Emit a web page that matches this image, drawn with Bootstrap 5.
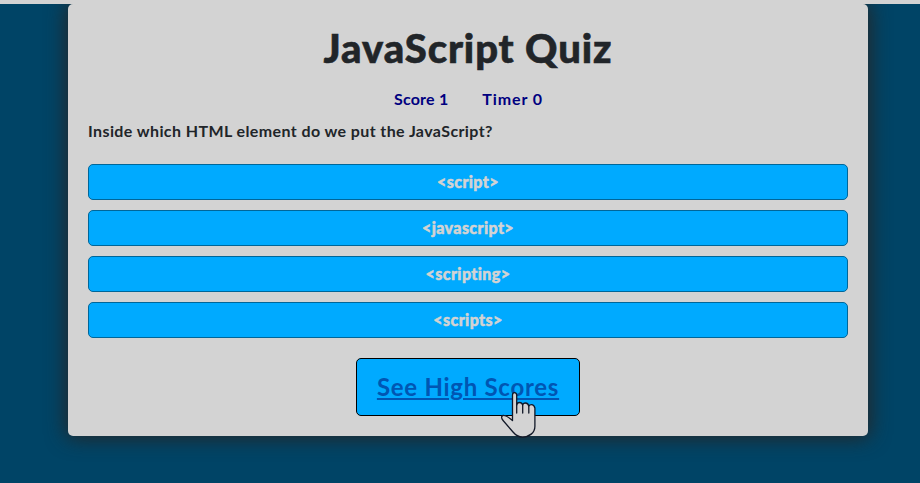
<!DOCTYPE html>
<html lang="en">
<head>
<meta charset="utf-8">
<meta name="viewport" content="width=device-width, initial-scale=1">
<title>JavaScript Quiz</title>
<link href="https://cdn.jsdelivr.net/npm/bootstrap@5.3.0/dist/css/bootstrap.min.css" rel="stylesheet">
<style>
body { background: #004466; font-family: "Gill Sans MT", Lato, sans-serif; font-variant-ligatures: none; border-top: 4px solid #d3d3d3; height: 483px; padding-left: 16px; overflow: hidden; }
.quiz-panel { width: 800px; height: 432px; padding: 20px; background: #d3d3d3; border-radius: 5px; box-shadow: 0 0 20px 2px #262626; clip-path: inset(0 -40px -40px -40px); color: #212529; }
.quiz-title { font-size: 40px; line-height: 48px; font-weight: 900; letter-spacing: .9px; -webkit-text-stroke: .6px; }
.quiz-stats { color: #000080; font-size: 16px; line-height: 24px; gap: 34px; margin-top: 15px; }
.quiz-stats span:first-child { letter-spacing: .2px; }
.quiz-stats span:last-child { letter-spacing: .9px; margin-right: -1px; }
.quiz-question { font-size: 16px; line-height: 24px; margin-top: 8px; letter-spacing: .4px; }
.answers { gap: 10px; margin-top: 21px; }
.answer { height: 36px; padding: 0; border: 1px solid #006699; border-radius: 5px; background: #00aaff; color: #d3d3d3; font-size: 16px; font-weight: 900; line-height: 34px; letter-spacing: .4px; -webkit-text-stroke: .5px; }
.scores-btn { width: 224px; height: 58px; margin-top: 20px; padding: 0; background: #00aaff; border: 1px solid #000; border-radius: 5px; }
.scores-btn a { color: #0056b3; font-size: 24px; line-height: 56px; letter-spacing: .73px; text-decoration-thickness: 2px; text-underline-offset: 2px; }
.hand { left: 144px; top: 33px; }
</style>
</head>
<body>
<main class="quiz-panel mx-auto d-flex flex-column">
  <h1 class="quiz-title text-center mb-0">JavaScript Quiz</h1>
  <div class="quiz-stats d-flex justify-content-center fw-bold"><span>Score 1</span><span>Timer 0</span></div>
  <div class="quiz-question fw-bold"><span>Inside which HTML element do we put the JavaScript?</span></div>
  <div class="answers d-grid">
    <button class="btn answer">&lt;script&gt;</button>
    <button class="btn answer">&lt;javascript&gt;</button>
    <button class="btn answer">&lt;scripting&gt;</button>
    <button class="btn answer">&lt;scripts&gt;</button>
  </div>
  <div class="scores-btn position-relative align-self-center text-center">
    <a href="#" class="fw-bold">See High Scores</a>
    <svg class="hand position-absolute" width="36" height="47" viewBox="0 0 36 47" fill="#d3d3d3" stroke="#111827" stroke-width="1.3" stroke-linejoin="round" stroke-linecap="round"><path d="M11.500 28.500V3Q11.500 .7 13.500 .7T15.700 3V13Q16 10.500 18.500 10.500T21.700 13Q22 11 24.500 11T27.800 14Q28.500 12.700 30.700 12.700T33.900 16V34C34 41 28 45 21.500 45C17 45 14.500 43 12 40L2.500 29C0 26 0 24 2 23.500C5 23 7 25 11.500 28.500"/><path d="M15.700 12V21M21.700 13V21M27.800 14V21" fill="none"/></svg>
  </div>
</main>
<script src="https://cdn.jsdelivr.net/npm/bootstrap@5.3.0/dist/js/bootstrap.bundle.min.js"></script>
</body>
</html>
